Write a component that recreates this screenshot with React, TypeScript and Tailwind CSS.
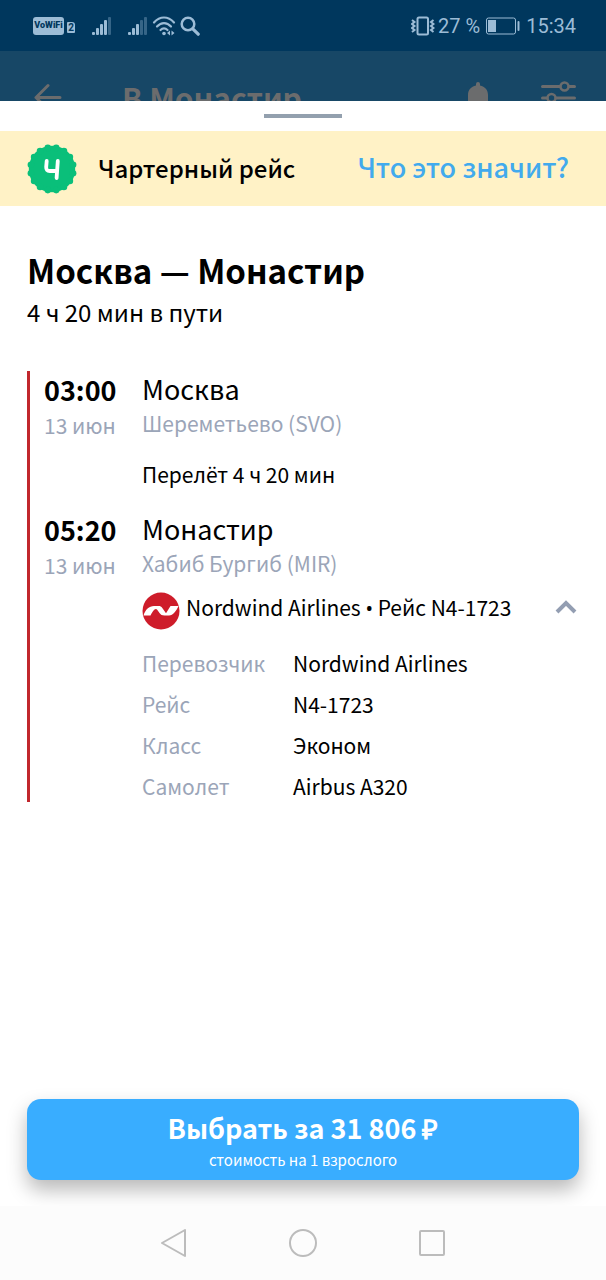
import React, { useState } from "react";

type Stop = {
  time: string;
  date: string;
  city: string;
  airport: string;
};

const departure: Stop = {
  time: "03:00",
  date: "13 июн",
  city: "Москва",
  airport: "Шереметьево (SVO)",
};

const arrival: Stop = {
  time: "05:20",
  date: "13 июн",
  city: "Монастир",
  airport: "Хабиб Бургиб (MIR)",
};

const details = [
  { label: "Перевозчик", value: "Nordwind Airlines" },
  { label: "Рейс", value: "N4-1723" },
  { label: "Класс", value: "Эконом" },
  { label: "Самолет", value: "Airbus A320" },
];

function Signal({ level }: { level: number }) {
  const bars = [3, 7, 11, 15, 18];
  return (
    <svg className="h-[18px] w-5" viewBox="0 0 20 18" fill="currentColor">
      {bars.map((h, i) => (
        <rect key={h} x={i * 4} y={18 - h} width="3" height={h} rx="1" opacity={i < level ? 1 : 0.35} />
      ))}
    </svg>
  );
}

function StatusBar() {
  return (
    <div className="flex h-[51px] items-center justify-between bg-[#00375d] pl-[33px] pr-[30px] font-[Roboto,sans-serif] text-[#9cbcd6]">
      <div className="flex items-center">
        <span className="flex h-[18px] w-[31px] items-center justify-center rounded-[3px] bg-[#9cbcd6] text-[9px] font-black text-[#00375d]">
          VoWiFi
        </span>
        <span className="ml-[3px] mt-1 flex h-[11px] w-2 items-center justify-center rounded-[1px] rounded-tr-[3px] bg-[#9cbcd6] text-[10px] font-bold text-[#00375d]">
          2
        </span>
        <div className="ml-[17px] flex">
          <Signal level={4} />
        </div>
        <div className="ml-4 flex">
          <Signal level={3} />
        </div>
        <svg className="ml-1 h-5 w-6" viewBox="0 0 24 20" fill="none" stroke="currentColor" strokeWidth="2.2" strokeLinecap="round">
          <path d="M2 6.5C8-0.2 16-0.2 22 6.5" />
          <path d="M5 10.5c4.200-4.600 9.800-4.600 14 0" />
          <path d="M8.500 14c2.200-2.300 4.800-2.300 7 0" />
          <circle cx="12" cy="17.500" r="1.800" fill="currentColor" stroke="none" />
          <path d="M18 14.500v5l-3-2.500zM19.500 14.500v5l3-2.500z" fill="currentColor" stroke="none" />
        </svg>
        <svg className="ml-1 h-5 w-5" viewBox="0 0 20 20" fill="none" stroke="currentColor">
          <circle cx="8" cy="8" r="6.300" strokeWidth="2.500" />
          <path d="M12.800 12.800l5.400 5.400" strokeWidth="3.200" strokeLinecap="round" />
        </svg>
      </div>
      <div className="flex items-center text-xl">
        <svg className="h-5 w-6" viewBox="0 0 24 20" fill="none" stroke="currentColor">
          <rect x="6.500" y="1.500" width="10.500" height="17" rx="1.500" strokeWidth="2" />
          <path d="M1 4l2.500 2-2.500 2 2.500 2-2.500 2 2.500 2-2.500 2" strokeWidth="2" />
          <path d="M22.500 4l-2.500 2 2.500 2-2.500 2 2.500 2-2.500 2 2.500 2" strokeWidth="2" />
        </svg>
        <span className="ml-[3px]">27 %</span>
        <svg className="ml-[6px] h-[18px] w-[34px]" viewBox="0 0 34 18" fill="none" stroke="currentColor">
          <rect x="0.500" y="1" width="29" height="16" rx="2" />
          <rect x="2" y="3" width="8" height="12" fill="currentColor" stroke="none" />
          <path d="M32.500 5v8" strokeWidth="2" strokeLinecap="round" />
        </svg>
        <span className="ml-[6px]">15:34</span>
      </div>
    </div>
  );
}

function DimmedHeader() {
  return (
    <div className="flex h-[50px] items-start overflow-hidden bg-[#174766] pl-[34px] pr-[30px] text-[#6b6c6d]">
      <svg className="mt-8 h-7 w-7 shrink-0" viewBox="0 0 28 28" fill="none" stroke="currentColor" strokeWidth="3" strokeLinecap="round" strokeLinejoin="round">
        <path d="M26 14.500H2M14 2.500L2 14.500l12 12" />
      </svg>
      <h2 className="ml-[60px] mt-[26px] flex-1 text-[30px] font-bold leading-10">В Монастир</h2>
      <svg className="mt-[30px] h-7 w-6 shrink-0" viewBox="0 0 24 28" fill="currentColor">
        <path d="M2 28V14c0-5 3-8.500 8-9.500V3a2 2 0 014 0v1.500c5 1 8 4.500 8 9.500v14z" />
      </svg>
      <svg className="ml-[51px] mt-[30px] h-7 w-[35px] shrink-0" viewBox="0 0 35 28" fill="none" stroke="currentColor" strokeWidth="3" strokeLinecap="round">
        <path d="M1.500 5.500H19M28 5.500h5.500M1.500 17H6M15 17h18.500" />
        <circle cx="23.500" cy="5.500" r="4" strokeWidth="2.500" />
        <circle cx="10.500" cy="17" r="4" strokeWidth="2.500" />
      </svg>
    </div>
  );
}

function CharterBadge() {
  return (
    <svg className="h-[50px] w-[50px] shrink-0" viewBox="0 0 50 50">
      <g fill="#0abf7a">
        <circle cx="25" cy="25" r="23.200" />
        {Array.from({ length: 16 }, (_, i) => {
          const a = ((i + 0.5) * Math.PI) / 8;
          return <circle key={i} cx={25 + 21.5 * Math.cos(a)} cy={25 + 21.5 * Math.sin(a)} r="3.300" />;
        })}
      </g>
      <path d="M19.700 17l-.500 6q-.200 4 3.500 4h7M30.800 17L29.600 34" fill="none" stroke="#fff" strokeWidth="3.800" strokeLinecap="round" />
    </svg>
  );
}

function StopRow({ stop }: { stop: Stop }) {
  return (
    <div className="flex">
      <div className="w-[98px] shrink-0">
        <p className="text-[27px] font-bold leading-[38px]">{stop.time}</p>
        <p className="text-[21px] leading-8 text-[#9ba5b8]">{stop.date}</p>
      </div>
      <div>
        <p className="text-[27px] leading-9">{stop.city}</p>
        <p className="text-[21px] leading-8 text-[#9ba5b8]">{stop.airport}</p>
      </div>
    </div>
  );
}

function NordwindLogo() {
  return (
    <svg className="h-[38px] w-[38px] shrink-0" viewBox="0 0 38 38">
      <circle cx="19" cy="19" r="18.500" fill="#ce1c2a" />
      <path
        d="M1.500 23.500C3.500 17.500 7 14 12 14h4.500c1.800 0 2.800.600 3.800 2l3.700 5.200L28.500 14h8c-2 4.500-5.500 9.500-9.500 9.500h-4.500c-2.500 0-3.800-.800-5-2.500l-2.300-3.300c-.700-1-1.700-1-2.700-.200-1.700 1.400-2.800 3.700-4 6z"
        fill="#fff"
      />
    </svg>
  );
}

export default function App() {
  const [open, setOpen] = useState(true);

  return (
    <div className="flex min-h-screen flex-col bg-white font-['Noto_Sans_CJK_SC',sans-serif] text-black">
      <StatusBar />
      <DimmedHeader />

      <div className="flex h-[30px] justify-center pt-[13px]">
        <div className="h-1 w-[78px] bg-[#93a0ae]" />
      </div>

      <div className="flex h-[75px] items-center bg-[#fff2c6] pl-[27px] pr-[37px]">
        <CharterBadge />
        <span className="ml-[21px] flex-1 whitespace-nowrap pb-0.5 text-[24px] font-medium">Чартерный рейс</span>
        <a href="#charter" className="whitespace-nowrap pb-0.5 text-[27px] font-medium text-[#42aaed]">
          Что это значит?
        </a>
      </div>

      <main className="flex-1 px-[27px] pt-[42px]">
        <h1 className="text-[33px] font-bold leading-[44px]">Москва — Монастир</h1>
        <p className="text-[24px] leading-10">4 ч 20 мин в пути</p>

        <section className="mt-[39px] border-l-[3px] border-[#c1272d] pb-0.5 pl-[14px]">
          <StopRow stop={departure} />
          <p className="mb-[21px] ml-[98px] mt-[17px] text-[21px] leading-8">Перелёт 4 ч 20 мин</p>
          <StopRow stop={arrival} />

          <div className="ml-[98px] mt-[10px]">
            <button
              type="button"
              aria-expanded={open}
              onClick={() => setOpen(!open)}
              className="flex h-10 w-full items-center text-left"
            >
              <NordwindLogo />
              <span className="ml-[6px] flex-1 whitespace-nowrap pb-2 text-[21px] leading-8">
                Nordwind Airlines <span className="font-['Noto_Sans',sans-serif] text-xl">•</span> Рейс N4-1723
              </span>
              <svg className="mb-2 mr-0.5 h-4 w-[22px] shrink-0" viewBox="0 0 22 16" fill="none" stroke="#939eb2" strokeWidth="4">
                <path d="M2 13l9-9 9 9" />
              </svg>
            </button>
            {open && (
              <dl className="mt-[18px] flex flex-col gap-[13px] text-[21px] leading-7">
                {details.map((item) => (
                  <div key={item.label} className="flex">
                    <dt className="w-[151px] shrink-0 text-[#9ba5b8]">{item.label}</dt>
                    <dd>{item.value}</dd>
                  </div>
                ))}
              </dl>
            )}
          </div>
        </section>
      </main>

      <div className="px-[27px] pb-[26px]">
        <button
          type="button"
          className="flex h-[81px] w-full flex-col items-center justify-center rounded-[14px] bg-[#39adff] pt-[5px] text-white shadow-[0_10px_20px_rgba(0,0,0,0.28)]"
        >
          <span className="text-[27px] font-bold leading-9">Выбрать за 31 806 ₽</span>
          <span className="text-[15px] leading-7">стоимость на 1 взрослого</span>
        </button>
      </div>

      <nav className="flex h-[74px] items-center justify-center gap-[101px] bg-[#fcfcfc] text-[#bcbcbc]">
        <button type="button" aria-label="Назад">
          <svg className="h-7 w-7" viewBox="0 0 28 28" fill="none" stroke="currentColor" strokeWidth="2" strokeLinejoin="round">
            <path d="M25 1v26L2 14z" />
          </svg>
        </button>
        <button type="button" aria-label="Домой">
          <svg className="h-7 w-7" viewBox="0 0 28 28" fill="none" stroke="currentColor" strokeWidth="2">
            <circle cx="14" cy="14" r="13" />
          </svg>
        </button>
        <button type="button" aria-label="Недавние">
          <svg className="h-7 w-7" viewBox="0 0 28 28" fill="none" stroke="currentColor" strokeWidth="2">
            <rect x="2" y="2" width="24" height="24" rx="1" />
          </svg>
        </button>
      </nav>
    </div>
  );
}
